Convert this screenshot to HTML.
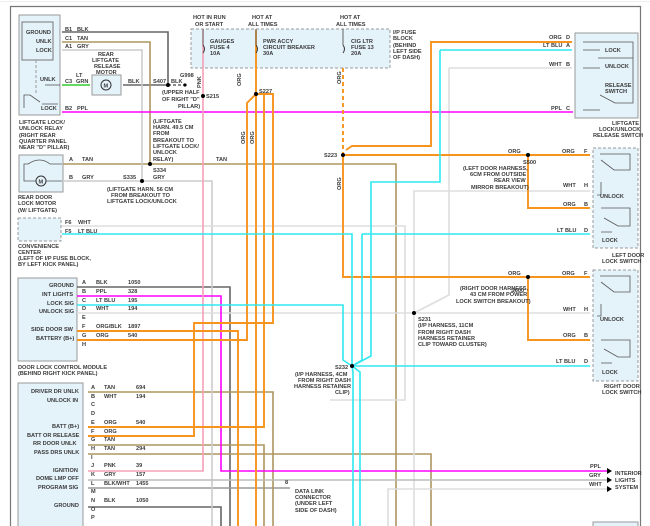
<!DOCTYPE html>
<html><head><meta charset="utf-8"><style>
html,body{margin:0;padding:0;background:#fff;width:650px;height:526px;overflow:hidden}
svg{display:block}
text{font-family:"Liberation Sans",sans-serif;font-size:5.6px;fill:#3a3a3a;font-weight:bold}
</style></head><body>
<svg width="650" height="526" viewBox="0 0 650 526" xmlns="http://www.w3.org/2000/svg">
<rect x="0" y="0" width="650" height="526" fill="#fff"/>
<line x1="0" y1="1.5" x2="650" y2="1.5" stroke="#eee" stroke-width="1"/>
<path d="M10.5 526 V6.5 H640.5 V526" fill="none" stroke="#777" stroke-width="1.2"/>

<g fill="#e4f2fa" stroke="#999" stroke-width="1">
<rect x="19" y="15" width="41" height="100"/>
<rect x="19" y="155" width="44" height="37"/>
<rect x="92" y="75" width="29" height="20"/>
<rect x="18" y="278" width="59" height="83"/>
<rect x="18" y="383" width="65" height="150"/>
<rect x="575" y="33" width="63" height="85"/>
</g>
<g fill="#e4f2fa" stroke="#999" stroke-width="1" stroke-dasharray="3,2">
<rect x="191" y="29" width="199" height="39"/>
<rect x="18" y="218" width="43" height="23"/>
<rect x="593" y="148" width="45" height="100"/>
<rect x="593" y="270" width="45" height="111"/>
</g>
<rect x="22" y="22" width="31" height="38" fill="none" stroke="#777"/>
<path d="M36 60 V95" stroke="#999" stroke-dasharray="3,2"/>
<path d="M24 108 V95 H30 L40 102 M42 104 H58" stroke="#555" fill="none" stroke-width="0.8"/>
<path d="M45 85 H60" stroke="#555" stroke-width="0.8"/>
<path d="M24 170 V164 H28 Q40 156 50 164 H62 M24 164 V181 H36 M46 181 H62" stroke="#555" fill="none" stroke-width="0.8"/>
<g stroke="#555" fill="none" stroke-width="0.8">
<path d="M583 42 H633 V103 H615 L600 95 M583 50 H600 M598 58 H633 M583 68 H600 M583 110 H600"/>
<path d="M601 160 L614 170 H630 V154 H600 M601 182 V195 M601 195 H597 M601 208 H630 V226 H618 L604 218 M601 232 H612"/>
<path d="M601 282 L614 292 H630 V276 H600 M601 304 V316 H597 M601 340 H630 V357 H618 L604 349 M601 363 H612"/>
</g>
<rect x="593" y="522" width="45" height="10" fill="#e4f2fa" stroke="#999"/>

<g fill="none" stroke-width="1.6">
<path d="M62 32 H168 V85" stroke="#666"/>
<path d="M123 85 H168" stroke="#666"/>
<path d="M168 85 H185" stroke="#666" stroke-dasharray="3,2"/>
<path d="M77 287 H230 V526" stroke="#666"/>
<path d="M88 507 H221 V526" stroke="#666"/>
<path d="M88 488 H290" stroke="#999"/>
<path d="M62 42 H150 V164" stroke="#ad955f"/>
<path d="M63 164 H396 V526" stroke="#ad955f"/>
<path d="M88 392 H273 V526" stroke="#ad955f"/>
<path d="M88 445 H264 V526" stroke="#ad955f"/>
<path d="M88 454 H431 V526" stroke="#ad955f"/>
<path d="M62 50 H142 V181" stroke="#ccc"/>
<path d="M63 181 H212 V526" stroke="#ccc"/>
<path d="M62 226 H405 V300 V400 H330" stroke="#ddd"/>
<path d="M449 68 H572" stroke="#ddd"/>
<path d="M449 68 V295 L414 313" stroke="#ddd"/>
<path d="M590 191 H414 V526" stroke="#ddd"/>
<path d="M77 313 H590" stroke="#ddd"/>
<path d="M88 480 H607" stroke="#bbb"/>
<path d="M388 526 V489 H607" stroke="#ddd"/>
<path d="M62 85 H90" stroke="#3c3"/>
<path d="M62 112 H573" stroke="#f0f"/>
<path d="M77 296 H221 V471 H607" stroke="#f0f"/>
<path d="M203 30 V471 H88" stroke="#f5a0b8"/>
<g stroke-width="1.9">
<path d="M256 30 V526" stroke="#f7941d"/>
<path d="M256 94 L247 103 V340 H77" stroke="#f7941d"/>
<path d="M256 94 L264 94 V427 H88" stroke="#f7941d"/>
<path d="M256 94 L273 94 V323 H194 V436 H88" stroke="#f7941d"/>
<path d="M77 331 H238 V526" stroke="#f7941d"/>
<path d="M343 68 V155" stroke="#f7941d" stroke-dasharray="4,3"/>
<path d="M343 155 V277 H590" stroke="#f7941d"/>
<path d="M343 155 H590" stroke="#f7941d"/>
<path d="M346 150 L352 146 H431 V42 H572" stroke="#f7941d"/>
<path d="M528 155 V208 H590" stroke="#f7941d"/>
<path d="M528 277 V340 H590" stroke="#f7941d"/>
</g>
<path d="M440 50 H572" stroke="#2ee8f0"/>
<path d="M440 50 V182 H371 V356 L352 366" stroke="#2ee8f0"/>
<path d="M62 234 H352 V366" stroke="#2ee8f0"/>
<path d="M362 234 H590" stroke="#2ee8f0"/>
<path d="M362 234 V360 L352 366" stroke="#2ee8f0"/>
<path d="M77 305 H343 V360 L352 366 H590" stroke="#2ee8f0"/>
<path d="M352 366 L360 372 V526 M352 366 L353 372 V526" stroke="#2ee8f0"/>
</g>
<path d="M203 29 V45 M256 29 V45 M343 29 V45" stroke="#666" stroke-width="1"/>
<path d="M203 45 q3 4 0 8 M256 45 q3 4 0 8 M343 45 q3 4 0 8" stroke="#333" fill="none"/>

<g fill="#000">
<circle cx="168" cy="85" r="2"/><circle cx="150" cy="164" r="2"/><circle cx="142" cy="181" r="2"/>
<circle cx="203" cy="96" r="2"/><circle cx="256" cy="94" r="2"/><circle cx="343" cy="155" r="2"/>
<circle cx="528" cy="155" r="2"/><circle cx="528" cy="277" r="2"/><circle cx="414" cy="313" r="2"/>
<circle cx="352" cy="366" r="2"/><circle cx="185" cy="85" r="1.6"/>
</g>
<g fill="#000"><path d="M607 468 l5 3 l-5 3z M607 477 l5 3 l-5 3z M607 486 l5 3 l-5 3z"/></g>
<circle cx="106" cy="85" r="5" fill="#e4f2fa" stroke="#333"/><text x="103.5" y="87.5">M</text>
<circle cx="41" cy="181" r="5" fill="#e4f2fa" stroke="#333"/><text x="38.5" y="183.5">M</text>

<text x="26" y="34">GROUND</text><text x="36" y="43">UNLK</text><text x="36" y="52">LOCK</text>
<text x="40" y="81">UNLK</text><text x="41" y="110">LOCK</text>
<text x="65" y="31">B1</text><text x="77" y="31">BLK</text><text x="65" y="40">C1</text><text x="77" y="40">TAN</text>
<text x="65" y="48">A1</text><text x="77" y="48">GRY</text>
<text x="65" y="83">C3</text><text x="76" y="77">LT</text><text x="76" y="83">GRN</text>
<text x="128" y="83">BLK</text><text x="153" y="83">S407</text><text x="171" y="83">BLK</text>
<text x="180" y="77">G998</text><text x="162" y="94">(UPPER HALF</text><text x="162" y="101">OF RIGHT "D"</text><text x="178" y="108">PILLAR)</text>
<text x="206" y="98">S215</text><text x="259" y="93">S227</text>
<text x="98" y="56">REAR</text><text x="92" y="62">LIFTGATE</text><text x="94" y="68">RELEASE</text><text x="96" y="74">MOTOR</text>
<text x="65" y="110">B2</text><text x="77" y="110">PPL</text>
<text x="19" y="124">LIFTGATE LOCK/</text><text x="19" y="130">UNLOCK RELAY</text><text x="19" y="137">(RIGHT REAR</text><text x="19" y="143">QUARTER PANEL</text><text x="19" y="149">NEAR "D" PILLAR)</text>
<text x="153" y="123">(LIFTGATE</text><text x="153" y="129">HARN. 49.5 CM</text><text x="153" y="135">FROM</text><text x="153" y="142">BREAKOUT TO</text><text x="153" y="148">LIFTGATE LOCK/</text><text x="153" y="154">UNLOCK</text><text x="153" y="161">RELAY)</text>
<text x="69" y="161">A</text><text x="82" y="161">TAN</text><text x="216" y="161">TAN</text><text x="153" y="172">S334</text>
<text x="69" y="179">B</text><text x="82" y="179">GRY</text><text x="123" y="179">S335</text><text x="153" y="179">GRY</text>
<text x="107" y="191">(LIFTGATE HARN. 56 CM</text><text x="111" y="197">FROM BREAKOUT TO</text><text x="107" y="203">LIFTGATE LOCK/UNLOCK</text>
<text x="18" y="199">REAR DOOR</text><text x="18" y="205">LOCK MOTOR</text><text x="18" y="212">(W/ LIFTGATE)</text>
<text x="65" y="224">F6</text><text x="78" y="224">WHT</text><text x="65" y="233">F5</text><text x="78" y="233">LT BLU</text>
<text x="18" y="248">CONVENIENCE</text><text x="18" y="254">CENTER</text><text x="18" y="260">(LEFT OF I/P FUSE BLOCK,</text><text x="18" y="266">BY LEFT KICK PANEL)</text>
<text x="193" y="19">HOT IN RUN</text><text x="195" y="26">OR START</text><text x="252" y="19">HOT AT</text><text x="248" y="26">ALL TIMES</text>
<text x="340" y="19">HOT AT</text><text x="336" y="26">ALL TIMES</text>
<text x="210" y="43">GAUGES</text><text x="210" y="49">FUSE 4</text><text x="210" y="55">10A</text>
<text x="263" y="43">PWR ACCY</text><text x="263" y="49">CIRCUIT BREAKER</text><text x="263" y="55">30A</text>
<text x="351" y="43">CIG LTR</text><text x="351" y="49">FUSE 13</text><text x="351" y="55">20A</text>
<text x="393" y="34">I/P FUSE</text><text x="393" y="40">BLOCK</text><text x="393" y="47">(BEHIND</text><text x="393" y="53">LEFT SIDE</text><text x="393" y="59">OF DASH)</text>
<text x="324" y="157">S223</text>
<text x="549" y="39">ORG</text><text x="566" y="39">D</text><text x="543" y="47">LT BLU</text><text x="566" y="47">A</text>
<text x="549" y="66">WHT</text><text x="566" y="66">B</text><text x="551" y="110">PPL</text><text x="566" y="110">C</text>
<text x="605" y="52">LOCK</text><text x="605" y="68">UNLOCK</text><text x="605" y="87">RELEASE</text><text x="605" y="93">SWITCH</text>
<text x="612" y="125">LIFTGATE</text><text x="599" y="131">LOCK/UNLOCK</text><text x="593" y="137">RELEASE SWITCH</text>
<text x="508" y="153">ORG</text><text x="562" y="153">ORG</text><text x="584" y="153">F</text>
<text x="523" y="164">S500</text><text x="463" y="170">(LEFT DOOR HARNESS,</text><text x="470" y="176">6CM FROM OUTSIDE</text><text x="494" y="182">REAR VIEW</text><text x="471" y="189">MIRROR BREAKOUT)</text>
<text x="563" y="187">WHT</text><text x="584" y="187">H</text><text x="600" y="198">UNLOCK</text>
<text x="563" y="206">ORG</text><text x="584" y="206">B</text><text x="557" y="232">LT BLU</text><text x="584" y="232">D</text><text x="602" y="242">LOCK</text>
<text x="612" y="257">LEFT DOOR</text><text x="602" y="263">LOCK SWITCH</text>
<text x="508" y="275">ORG</text><text x="562" y="275">ORG</text><text x="584" y="275">F</text>
<text x="511" y="292">S600</text><text x="460" y="290">(RIGHT DOOR HARNESS,</text><text x="470" y="296">43 CM FROM POWER</text><text x="456" y="303">LOCK SWITCH BREAKOUT)</text>
<text x="563" y="311">WHT</text><text x="584" y="311">H</text><text x="600" y="321">UNLOCK</text>
<text x="563" y="337">ORG</text><text x="584" y="337">B</text><text x="556" y="363">LT BLU</text><text x="584" y="363">D</text><text x="602" y="374">LOCK</text>
<text x="604" y="388">RIGHT DOOR</text><text x="602" y="394">LOCK SWITCH</text>
<text x="418" y="321">S231</text><text x="418" y="327">(I/P HARNESS, 11CM</text><text x="418" y="334">FROM RIGHT DASH</text><text x="418" y="340">HARNESS RETAINER</text><text x="418" y="346">CLIP TOWARD CLUSTER)</text>
<text x="335" y="369">S232</text><text x="295" y="376">(I/P HARNESS, 4CM</text><text x="298" y="382">FROM RIGHT DASH</text><text x="294" y="388">HARNESS RETAINER</text><text x="335" y="394">CLIP)</text>
<text x="49" y="287">GROUND</text><text x="42" y="296">INT LIGHTS</text><text x="47" y="305">LOCK SIG</text><text x="39" y="313">UNLOCK SIG</text>
<text x="31" y="331">SIDE DOOR SW</text><text x="36" y="340">BATTERY (B+)</text>
<text x="82" y="284">A</text><text x="96" y="284">BLK</text><text x="128" y="284">1050</text>
<text x="82" y="293">B</text><text x="96" y="293">PPL</text><text x="128" y="293">328</text>
<text x="82" y="302">C</text><text x="96" y="302">LT BLU</text><text x="128" y="302">195</text>
<text x="82" y="310">D</text><text x="96" y="310">WHT</text><text x="128" y="310">194</text>
<text x="82" y="319">E</text><text x="82" y="328">F</text><text x="96" y="328">ORG/BLK</text><text x="128" y="328">1897</text>
<text x="82" y="337">G</text><text x="96" y="337">ORG</text><text x="128" y="337">540</text><text x="82" y="346">H</text>
<text x="18" y="369">DOOR LOCK CONTROL MODULE</text><text x="18" y="375">(BEHIND RIGHT KICK PANEL)</text>
<text x="31" y="393">DRIVER DR UNLK</text><text x="47" y="402">UNLOCK IN</text>
<text x="52" y="428">BATT (B+)</text><text x="27" y="437">BATT OR RELEASE</text><text x="33" y="445">RR DOOR UNLK</text><text x="34" y="454">PASS DRS UNLK</text>
<text x="53" y="472">IGNITION</text><text x="36" y="480">DOME LMP OFF</text><text x="38" y="489">PROGRAM SIG</text><text x="54" y="507">GROUND</text>
<text x="91" y="389">A</text><text x="104" y="389">TAN</text><text x="136" y="389">694</text>
<text x="91" y="398">B</text><text x="104" y="398">WHT</text><text x="136" y="398">194</text>
<text x="91" y="406">C</text><text x="91" y="415">D</text>
<text x="91" y="424">E</text><text x="104" y="424">ORG</text><text x="136" y="424">540</text>
<text x="91" y="433">F</text><text x="104" y="433">ORG</text><text x="91" y="441">G</text><text x="104" y="441">TAN</text>
<text x="91" y="450">H</text><text x="104" y="450">TAN</text><text x="136" y="450">294</text><text x="91" y="459">I</text>
<text x="91" y="467">J</text><text x="104" y="467">PNK</text><text x="136" y="467">39</text>
<text x="91" y="476">K</text><text x="104" y="476">GRY</text><text x="136" y="476">157</text>
<text x="91" y="485">L</text><text x="104" y="485">BLK/WHT</text><text x="136" y="485">1455</text>
<text x="91" y="493">M</text><text x="91" y="502">N</text><text x="104" y="502">BLK</text><text x="136" y="502">1050</text>
<text x="91" y="511">O</text><text x="91" y="519">P</text>
<text x="285" y="484">8</text><text x="295" y="493">DATA LINK</text><text x="295" y="499">CONNECTOR</text><text x="295" y="505">(UNDER LEFT</text><text x="295" y="512">SIDE OF DASH)</text>
<text x="590" y="468">PPL</text><text x="589" y="477">GRY</text><text x="589" y="486">WHT</text>
<text x="615" y="475">INTERIOR</text><text x="615" y="482">LIGHTS</text><text x="615" y="489">SYSTEM</text>
<g transform="rotate(-90)" style="font-size:5px"><text x="-86" y="241">ORG</text><text x="-144" y="245">ORG</text><text x="-144" y="254">ORG</text><text x="-84" y="341">ORG</text><text x="-190" y="341">ORG</text><text x="-88" y="201">PNK</text></g>
</svg>
</body></html>
